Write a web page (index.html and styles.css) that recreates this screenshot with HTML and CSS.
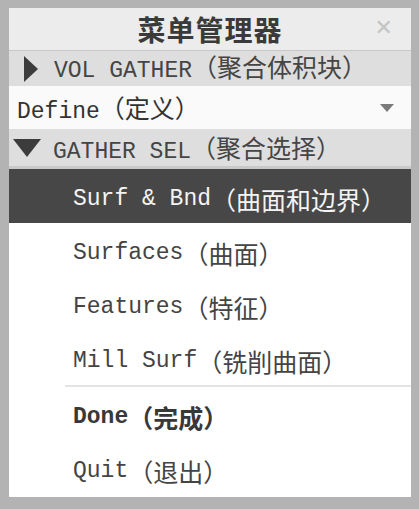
FILE: index.html
```html
<!DOCTYPE html>
<html lang="zh">
  <head>
    <meta charset="UTF-8" />
    <title>菜单管理器</title>
    <link rel="stylesheet" href="styles.css">
  </head>
  <body>
    <div class="frame">
      <div class="panel">
        <div class="titlebar">
          <span class="title">菜单管理器</span>
          <span class="close">&#x2715;</span>
        </div>
        <div class="group">
          <span class="tri-right"></span>
          <span>VOL GATHER<span class="zh">（聚合体积块）</span></span>
        </div>
        <div class="select-row">
          <span>Define<span class="zh">（定义）</span></span>
          <span class="tri-small"></span>
        </div>
        <div class="group open">
          <span class="tri-down"></span>
          <span>GATHER SEL<span class="zh">（聚合选择）</span></span>
        </div>
        <div class="menu">
          <div class="item active">Surf &amp; Bnd<span class="zh">（曲面和边界）</span></div>
          <div class="item">Surfaces<span class="zh">（曲面）</span></div>
          <div class="item">Features<span class="zh">（特征）</span></div>
          <div class="item">Mill Surf<span class="zh">（铣削曲面）</span></div>
          <div class="sep"></div>
          <div class="item bold">Done<span class="zh">（完成）</span></div>
          <div class="item">Quit<span class="zh">（退出）</span></div>
        </div>
      </div>
    </div>
  </body>
</html>
```

FILE: styles.css
```css
html, body {
  margin: 0;
  padding: 0;
}
body {
  width: 419px;
  height: 509px;
  background: #b3b3b3;
  font-family: "Liberation Mono", "Noto Sans CJK SC", monospace;
  color: #3c3c3c;
}
.frame {
  padding: 8px 8px 12px 9px;
}
.panel {
  background: #ffffff;
  height: 489px;
  display: flex;
  flex-direction: column;
}
.titlebar {
  height: 42px;
  background: #ececec;
  border-bottom: 1px solid #c8c8c8;
  display: flex;
  align-items: center;
  justify-content: center;
  position: relative;
}
.title {
  font-family: "Noto Sans CJK SC", sans-serif;
  font-weight: bold;
  font-size: 28px;
  color: #3a3a3a;
  letter-spacing: 1px;
}
.close {
  position: absolute;
  right: 18px;
  top: 7px;
  font-family: "DejaVu Sans", sans-serif;
  font-size: 22px;
  font-weight: bold;
  color: #c4c4c4;
}
.zh {
  font-family: "Noto Sans CJK SC", sans-serif;
  font-size: 25px;
  line-height: 1;
}
.group {
  background: #dedede;
  height: 35px;
  display: flex;
  align-items: center;
  font-size: 23px;
  line-height: 26px;
  color: #454545;
  padding-left: 15px;
  gap: 16px;
}
.group.open {
  height: 37px;
  padding-left: 4px;
  gap: 12px;
  border-bottom: 3px solid #c9c9c9;
}
.group.open span:last-child {
  padding-top: 5px;
}
.tri-right {
  width: 0;
  height: 0;
  border-top: 13px solid transparent;
  border-bottom: 13px solid transparent;
  border-left: 14px solid #3c3c3c;
}
.tri-down {
  width: 0;
  height: 0;
  border-left: 14px solid transparent;
  border-right: 14px solid transparent;
  border-top: 18px solid #3c3c3c;
}
.select-row {
  height: 43px;
  background: #fafafa;
  display: flex;
  align-items: center;
  justify-content: space-between;
  padding: 4px 17px 0 8px;
  box-sizing: border-box;
  font-size: 23px;
  line-height: 26px;
  color: #333333;
}
.tri-small {
  width: 0;
  height: 0;
  margin-top: -4px;
  border-left: 7px solid transparent;
  border-right: 7px solid transparent;
  border-top: 8px solid #7a7a7a;
}
.menu {
  flex: 1;
  display: flex;
  flex-direction: column;
}
.item {
  height: 54px;
  box-sizing: border-box;
  display: flex;
  align-items: center;
  padding: 6px 0 0 64px;
  font-size: 23px;
  line-height: 26px;
  color: #444444;
}
.item.active {
  background: #474747;
  color: #f4f4f4;
}
.item.bold {
  font-weight: bold;
  color: #383838;
}
.sep {
  height: 2px;
  margin-left: 56px;
  background: #e4e4e4;
}
```
